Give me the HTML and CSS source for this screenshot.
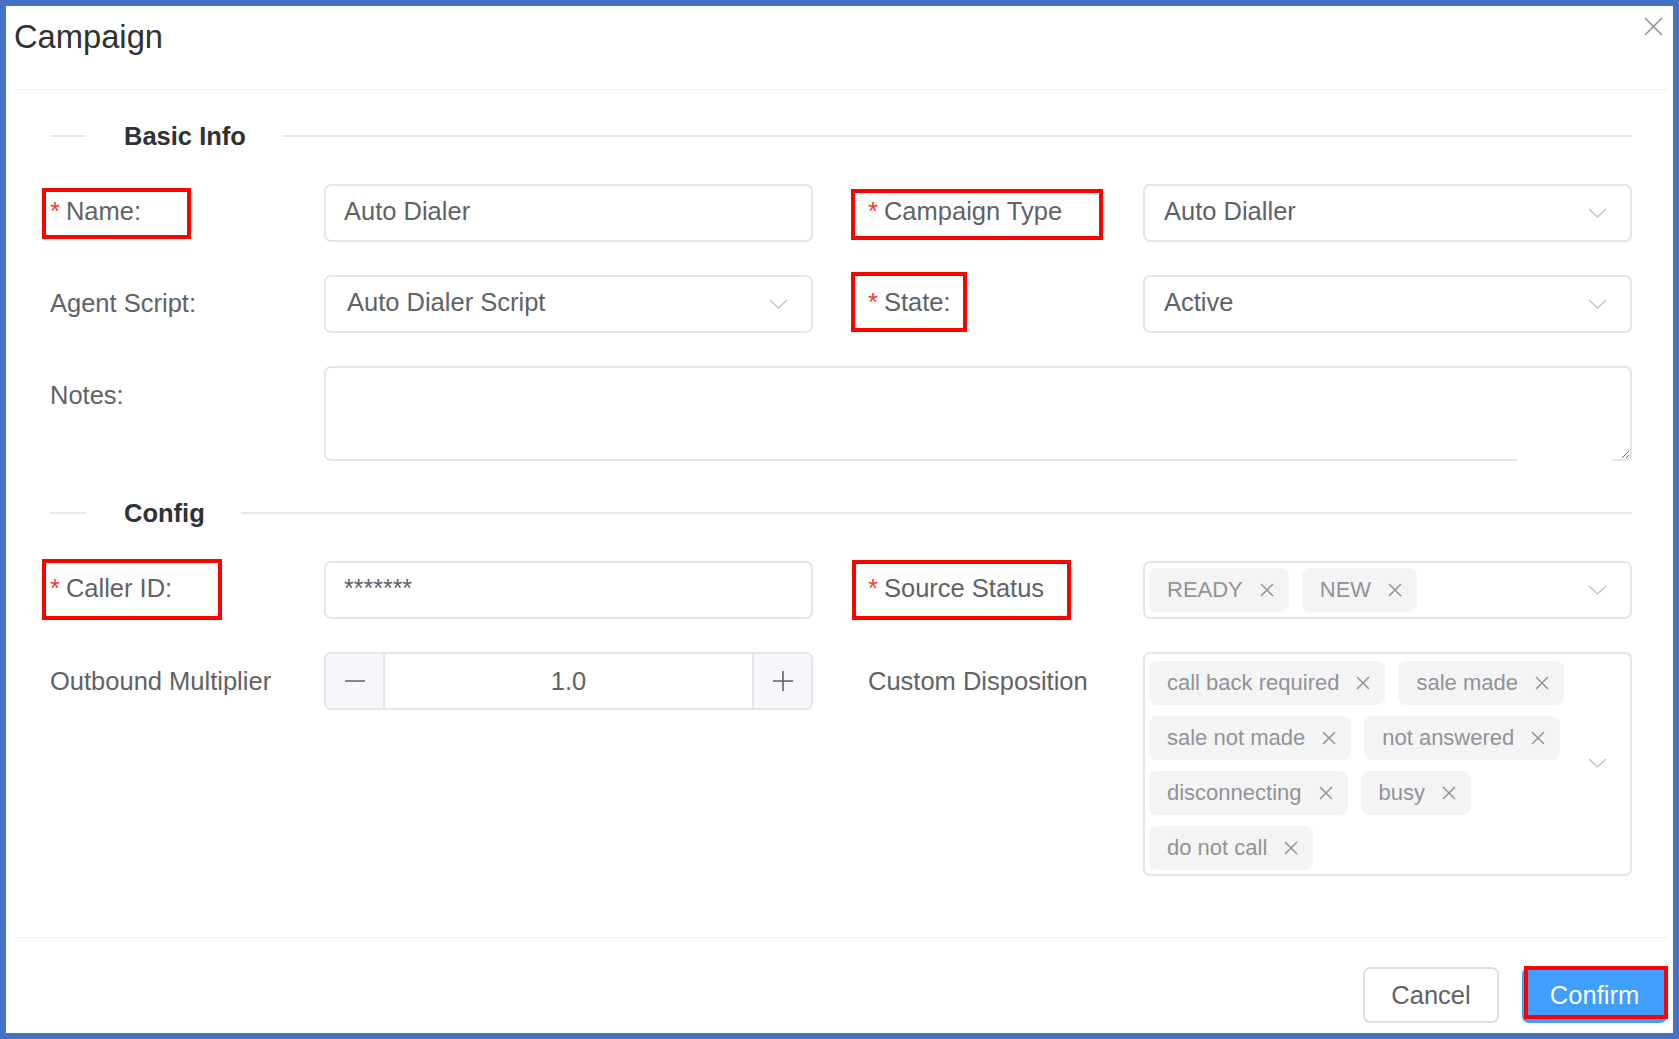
FILE: index.html
```html
<!DOCTYPE html>
<html lang="en">
<head>
<meta charset="utf-8">
<title>Campaign</title>
<link rel="stylesheet" href="styles.css">
</head>
<body>
<div class="dialog">
  <div class="dlg-header"><span class="dlg-title">Campaign</span></div>
  <button class="dlg-close" aria-label="Close">
    <svg width="19" height="19" viewBox="0 0 19 19"><path d="M1 1 L18 18 M18 1 L1 18" stroke="#909399" stroke-width="1.6" fill="none"/></svg>
  </button>

  <div class="dlg-body">
    <div class="divider"><span class="divider-text">Basic Info</span></div>
    <div class="form-grid">
      <div class="lbl req">Name:<span class="annot annot-name"></span></div>
      <div class="field input"><span class="val">Auto Dialer</span></div>
      <div class="lbl lbl2 req">Campaign Type<span class="annot annot-type"></span></div>
      <div class="field select"><span class="val">Auto Dialler</span>
        <svg class="chev" width="19" height="10" viewBox="0 0 19 10"><path d="M1 1 L9.5 9 L18 1" stroke="#c0c4cc" stroke-width="1.5" fill="none"/></svg>
      </div>

      <div class="lbl lbl-mid">Agent Script:</div>
      <div class="field select"><span class="val val-pad">Auto Dialer Script</span>
        <svg class="chev" width="19" height="10" viewBox="0 0 19 10"><path d="M1 1 L9.5 9 L18 1" stroke="#c0c4cc" stroke-width="1.5" fill="none"/></svg>
      </div>
      <div class="lbl lbl2 req">State:<span class="annot annot-state"></span></div>
      <div class="field select"><span class="val">Active</span>
        <svg class="chev" width="19" height="10" viewBox="0 0 19 10"><path d="M1 1 L9.5 9 L18 1" stroke="#c0c4cc" stroke-width="1.5" fill="none"/></svg>
      </div>

      <div class="lbl lbl-full">Notes:</div>
      <div class="notes-wrap"><textarea class="notes"></textarea></div>
    </div>

    <div class="divider divider-config"><span class="divider-text">Config</span></div>
    <div class="form-grid">
      <div class="lbl req">Caller ID:<span class="annot annot-caller"></span></div>
      <div class="field input"><span class="val stars">*******</span></div>
      <div class="lbl lbl2 req">Source Status<span class="annot annot-source"></span></div>
      <div class="field multi">
        <div class="tags">
          <span class="tag">READY<svg class="tag-x" width="14" height="14" viewBox="0 0 14 14"><path d="M1 1 L13 13 M13 1 L1 13" stroke="#909399" stroke-width="1.5"/></svg></span>
          <span class="tag">NEW<svg class="tag-x" width="14" height="14" viewBox="0 0 14 14"><path d="M1 1 L13 13 M13 1 L1 13" stroke="#909399" stroke-width="1.5"/></svg></span>
        </div>
        <svg class="chev" width="19" height="10" viewBox="0 0 19 10"><path d="M1 1 L9.5 9 L18 1" stroke="#c0c4cc" stroke-width="1.5" fill="none"/></svg>
      </div>

      <div class="lbl lbl-full">Outbound Multiplier</div>
      <div class="field number">
        <span class="num-btn num-minus"><svg width="20" height="20" viewBox="0 0 20 20"><path d="M0 10 H20" stroke="#606266" stroke-width="1.6"/></svg></span>
        <span class="num-val">1.0</span>
        <span class="num-btn num-plus"><svg width="20" height="20" viewBox="0 0 20 20"><path d="M0 10 H20 M10 0 V20" stroke="#606266" stroke-width="1.6"/></svg></span>
      </div>
      <div class="lbl lbl2 lbl-full">Custom Disposition</div>
      <div class="field multi multi-tall">
        <div class="tags">
          <span class="tag">call back required<svg class="tag-x" width="14" height="14" viewBox="0 0 14 14"><path d="M1 1 L13 13 M13 1 L1 13" stroke="#909399" stroke-width="1.5"/></svg></span>
          <span class="tag">sale made<svg class="tag-x" width="14" height="14" viewBox="0 0 14 14"><path d="M1 1 L13 13 M13 1 L1 13" stroke="#909399" stroke-width="1.5"/></svg></span>
          <span class="tag">sale not made<svg class="tag-x" width="14" height="14" viewBox="0 0 14 14"><path d="M1 1 L13 13 M13 1 L1 13" stroke="#909399" stroke-width="1.5"/></svg></span>
          <span class="tag">not answered<svg class="tag-x" width="14" height="14" viewBox="0 0 14 14"><path d="M1 1 L13 13 M13 1 L1 13" stroke="#909399" stroke-width="1.5"/></svg></span>
          <span class="tag">disconnecting<svg class="tag-x" width="14" height="14" viewBox="0 0 14 14"><path d="M1 1 L13 13 M13 1 L1 13" stroke="#909399" stroke-width="1.5"/></svg></span>
          <span class="tag">busy<svg class="tag-x" width="14" height="14" viewBox="0 0 14 14"><path d="M1 1 L13 13 M13 1 L1 13" stroke="#909399" stroke-width="1.5"/></svg></span>
          <span class="tag">do not call<svg class="tag-x" width="14" height="14" viewBox="0 0 14 14"><path d="M1 1 L13 13 M13 1 L1 13" stroke="#909399" stroke-width="1.5"/></svg></span>
        </div>
        <svg class="chev chev-up" width="19" height="10" viewBox="0 0 19 10"><path d="M1 1 L9.5 9 L18 1" stroke="#c0c4cc" stroke-width="1.5" fill="none"/></svg>
      </div>
    </div>
  </div>

  <div class="dlg-footer">
    <button class="btn btn-cancel">Cancel</button>
    <button class="btn btn-confirm">Confirm<span class="annot annot-confirm"></span></button>
  </div>
</div>
</body>
</html>
```

FILE: styles.css
```css
* { box-sizing: border-box; }

body {
  margin: 0;
  background: #ffffff;
  font-family: "Liberation Sans", Arial, Helvetica, sans-serif;
  color: #606266;
}

.dialog {
  position: relative;
  width: 1679px;
  height: 1039px;
  border: 6px solid #4472c4;
  background: #ffffff;
  display: flex;
  flex-direction: column;
}

.dlg-header {
  margin: 0 5px 0 7px;
  height: 84px;
  padding: 8px 0 0 1px;
  border-bottom: 1px solid #eef2f8;
}

.dlg-title {
  font-size: 32.7px;
  line-height: 46px;
  color: #303133;
}

.dlg-close {
  position: absolute;
  top: 11px;
  right: 10px;
  width: 19px;
  height: 19px;
  padding: 0;
  border: 0;
  background: transparent;
  display: block;
}
.dlg-close svg { display: block; }

.dlg-body {
  padding: 0 41px 0 44px;
}

.divider {
  display: flex;
  align-items: center;
  height: 30px;
  margin-top: 31px;
}
.divider::before {
  content: "";
  width: 36px;
  height: 2px;
  background: #e4e7ed;
}
.divider::after {
  content: "";
  flex: 1;
  height: 2px;
  background: #e4e7ed;
}
.divider-text {
  padding: 0 36px 0 38px;
  font-size: 25.5px;
  font-weight: bold;
  color: #303133;
  line-height: 30px;
}
.divider-config { margin-top: 37px; }

.form-grid {
  display: grid;
  grid-template-columns: 274px 489px 330px 489px;
  row-gap: 33px;
  margin-top: 33px;
  align-items: start;
}

.lbl {
  position: relative;
  font-size: 25.5px;
  line-height: 55px;
  height: 58px;
  color: #606266;
  white-space: nowrap;
}
.lbl-mid { line-height: 56px; }
.lbl-full { line-height: 59px; }
.lbl2 { padding-left: 55px; }
.req::before {
  content: "*";
  color: #f53a3a;
  margin-right: 6px;
}

.annot {
  position: absolute;
  border: 4px solid #ff0000;
  pointer-events: none;
}
.annot-name   { left: -8px; top: 4px;  width: 149px; height: 51px; }
.annot-type   { left: 38px; top: 5px;  width: 252px; height: 51px; }
.annot-state  { left: 38px; top: -3px; width: 116px; height: 60px; }
.annot-caller { left: -8px; top: -2px; width: 180px; height: 61px; }
.annot-source { left: 39px; top: -1px; width: 219px; height: 60px; }

.field {
  height: 58px;
  border: 2px solid #e2e5eb;
  border-radius: 7px;
  background: #ffffff;
  font-size: 25.5px;
  color: #606266;
}

.input {
  display: flex;
  align-items: center;
  padding: 0 18px 3px;
}
.stars {
  font-size: 25px;
  align-self: flex-start;
  line-height: 50px;
}

.select {
  display: flex;
  align-items: center;
  justify-content: space-between;
  padding: 0 23px 0 19px;
}
.select .val { padding-bottom: 3px; }
.val-pad { padding-left: 2px; }
.chev { display: block; flex: none; }
.chev-up { margin-bottom: 5px; }

.notes-wrap {
  position: relative;
  grid-column: 2 / 5;
  height: 95px;
}
.notes-wrap::after {
  content: "";
  position: absolute;
  left: 1193px;
  bottom: 0;
  width: 95px;
  height: 2px;
  background: #ffffff;
}
.notes {
  display: block;
  width: 100%;
  height: 95px;
  border: 2px solid #e2e5eb;
  border-radius: 7px;
  resize: vertical;
  font-family: inherit;
  font-size: 25.5px;
  color: #606266;
  outline: none;
  padding: 8px 18px;
}

.multi {
  display: flex;
  align-items: center;
  padding: 0 23px 0 4px;
}
.multi-tall {
  height: auto;
  padding-top: 7px;
  padding-bottom: 4px;
}
.tags {
  flex: 1;
  display: flex;
  flex-wrap: wrap;
  gap: 11px 13px;
}
.tag {
  display: inline-flex;
  align-items: center;
  height: 44px;
  padding: 0 15px 0 18px;
  background: #f4f4f5;
  border-radius: 8px;
  font-size: 22px;
  color: #909399;
  white-space: nowrap;
}
.tag-x {
  display: block;
  margin-left: 17px;
}

.number {
  display: flex;
  align-items: stretch;
  padding: 0;
  overflow: hidden;
}
.num-btn {
  width: 59px;
  flex: none;
  background: #f5f7fa;
  display: flex;
  align-items: center;
  justify-content: center;
}
.num-minus { border-right: 2px solid #e2e5eb; }
.num-plus { border-left: 2px solid #e2e5eb; }
.num-btn svg { display: block; }
.num-val {
  flex: 1;
  display: flex;
  align-items: center;
  justify-content: center;
  font-size: 25.5px;
  color: #606266;
}

.dlg-footer {
  margin: auto 5px 0 7px;
  height: 96px;
  border-top: 1px solid #eef2f8;
  padding: 29px 1px 10px 0;
  display: flex;
  justify-content: flex-end;
  gap: 23px;
}

.btn {
  position: relative;
  flex: none;
  height: 56px;
  padding: 0;
  border-radius: 7px;
  font-family: inherit;
  font-size: 25.5px;
  line-height: 52px;
  text-align: center;
}
.btn-cancel {
  width: 136px;
  border: 2px solid #dcdfe6;
  background: #ffffff;
  color: #606266;
}
.btn-confirm {
  width: 145px;
  border: 2px solid #409eff;
  background: #409eff;
  color: #ffffff;
}
.annot-confirm { left: 0; top: -3px; width: 144px; height: 53px; }
```
